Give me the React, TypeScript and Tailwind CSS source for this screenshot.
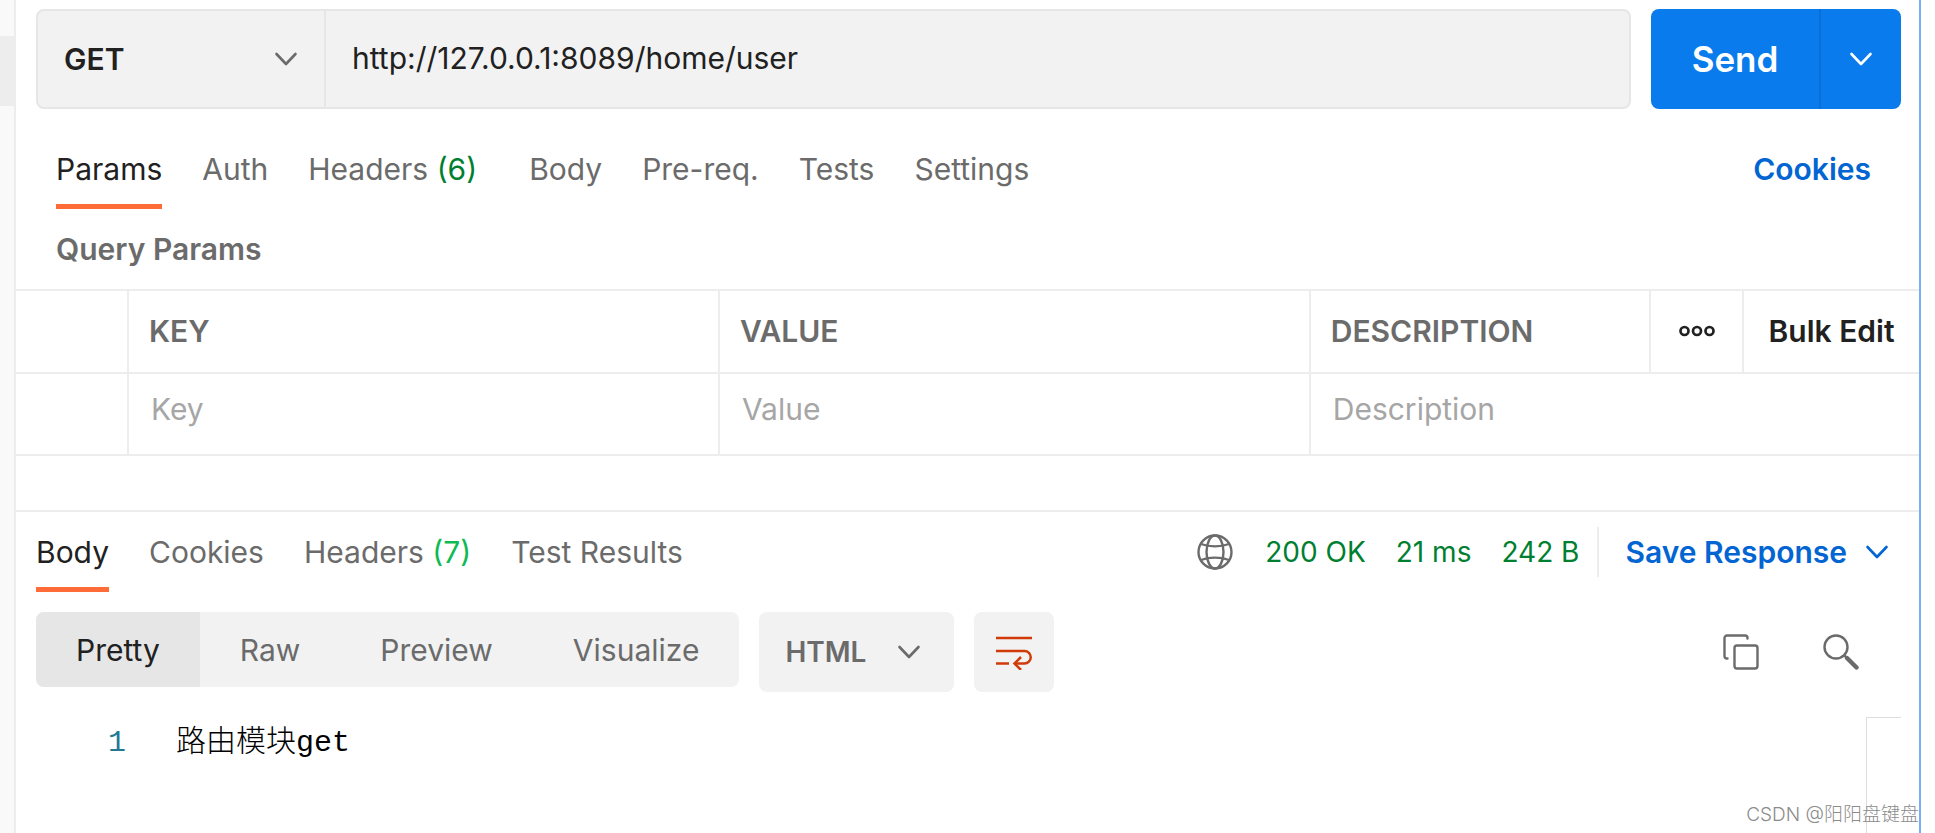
import { useState } from 'react';

const requestTabs = [
  { label: 'Params' },
  { label: 'Auth' },
  { label: 'Headers', count: 6 },
  { label: 'Body' },
  { label: 'Pre-req.' },
  { label: 'Tests' },
  { label: 'Settings' },
];

const responseTabs = [
  { label: 'Body' },
  { label: 'Cookies' },
  { label: 'Headers', count: 7 },
  { label: 'Test Results' },
];

const viewModes = ['Pretty', 'Raw', 'Preview', 'Visualize'];

const Chevron = ({ className }: { className?: string }) => (
  <svg
    viewBox="0 0 24 14"
    className={`h-[14px] w-6 ${className ?? ''}`}
    fill="none"
    stroke="currentColor"
    strokeWidth="2.6"
    strokeLinecap="round"
    strokeLinejoin="round"
  >
    <path d="M2.500 2l9.500 10L21.500 2" />
  </svg>
);

const GlobeIcon = () => (
  <svg viewBox="0 0 36 36" className="size-9" fill="none" stroke="currentColor" strokeWidth="2.4">
    <circle cx="18" cy="18" r="16.5" />
    <ellipse cx="18" cy="18" rx="8.5" ry="16.5" />
    <path d="M4 10c8 3.200 20 3.200 28 0M4 26c8-3.200 20-3.200 28 0" />
  </svg>
);

const CopyIcon = () => (
  <svg viewBox="0 0 36 36" className="size-9" fill="none" stroke="currentColor" strokeWidth="2.4" strokeLinecap="round">
    <rect x="11.500" y="11.500" width="23" height="23" rx="2.500" />
    <path d="M4.500 24.500H4A2.500 2.500 0 0 1 1.500 22V4A2.500 2.500 0 0 1 4 1.500h18A2.500 2.500 0 0 1 24.500 4v.5" />
  </svg>
);

const SearchIcon = () => (
  <svg viewBox="0 0 36 36" className="size-9" fill="none" stroke="currentColor" strokeLinecap="round">
    <circle cx="13" cy="13" r="11.500" strokeWidth="2.400" />
    <path d="M21.500 21.500l2 2" strokeWidth="2.400" />
    <path d="M24 24l9.500 9.500" strokeWidth="4.400" />
  </svg>
);

const WrapIcon = () => (
  <svg viewBox="0 0 36 36" className="size-9" fill="none" stroke="currentColor" strokeWidth="2.500">
    <path d="M0 4h36M0 17h28.500a6.250 6.250 0 0 1 0 12.500H19M0 29.500h13" />
    <path d="M25 23l-6.500 6.500L25 36" />
  </svg>
);

const MoreIcon = () => (
  <svg viewBox="0 0 36 12" className="h-3 w-9" fill="none" stroke="currentColor" strokeWidth="2.700">
    <circle cx="5.500" cy="6" r="4" />
    <circle cx="18" cy="6" r="4" />
    <circle cx="30.500" cy="6" r="4" />
  </svg>
);

const App = () => {
  const [method, setMethod] = useState('GET');
  const [url, setUrl] = useState('http://127.0.0.1:8089/home/user');
  const [requestTab, setRequestTab] = useState('Params');
  const [responseTab, setResponseTab] = useState('Body');
  const [viewMode, setViewMode] = useState('Pretty');
  const [format, setFormat] = useState('HTML');

  return (
    <div className="relative flex min-h-screen bg-white font-['Inter','Noto_Sans_CJK_SC',sans-serif] text-[30px] leading-9 text-[#6b6b6b]">
      {/* Collapsed sidebar */}
      <aside className="w-4 shrink-0 border-r-2 border-[#ededed] bg-[#f9f9f9] pt-9">
        <div className="h-[70px] bg-[#ededed]" />
      </aside>

      <main className="mr-[14px] flex min-w-0 flex-1 flex-col border-r-2 border-[#7aadf7]">
        {/* Request bar */}
        <div className="flex gap-5 pt-[9px] pr-[18px] pl-5">
          <div className="flex h-[100px] min-w-0 flex-1 rounded-lg border-2 border-[#e6e6e6] bg-[#f2f2f2] text-[#212121]">
            <div className="relative w-[288px] shrink-0 border-r-2 border-[#e6e6e6]">
              <select
                aria-label="Method"
                value={method}
                onChange={(e) => setMethod(e.target.value)}
                className="h-full w-full appearance-none bg-transparent px-[26px] text-[30px] font-semibold outline-none"
              >
                <option>GET</option>
                <option>POST</option>
                <option>PUT</option>
                <option>DELETE</option>
              </select>
              <Chevron className="pointer-events-none absolute top-[41px] right-[26px] text-[#6b6b6b]" />
            </div>
            <input
              type="text"
              aria-label="Request URL"
              value={url}
              onChange={(e) => setUrl(e.target.value)}
              className="min-w-0 flex-1 bg-transparent px-[26px] pb-0.5 outline-none"
            />
          </div>
          <div className="flex h-[100px] w-[250px] shrink-0 overflow-hidden rounded-lg bg-[#097bed] text-white">
            <button className="flex-1 text-[35px] font-semibold">Send</button>
            <button aria-label="Send options" className="flex w-[82px] items-center justify-center border-l-2 border-[#0a70d8]">
              <Chevron />
            </button>
          </div>
        </div>

        {/* Request tabs */}
        <div className="flex items-end justify-between pt-[42px] pr-12 pl-10">
          <div className="flex gap-10">
            {requestTabs.map((tab) => (
              <button
                key={tab.label}
                onClick={() => setRequestTab(tab.label)}
                className={`border-b-[5px] pb-[17px] ${
                  requestTab === tab.label ? 'border-[#ff6c37] text-[#212121]' : 'border-transparent'
                } ${tab.count ? 'pr-3' : ''}`}
              >
                {tab.label}
                {tab.count && <span className="text-[#007f31]"> ({tab.count})</span>}
              </button>
            ))}
          </div>
          <a href="#cookies" className="pb-[22px] font-semibold text-[#0265d2]">
            Cookies
          </a>
        </div>

        {/* Query params */}
        <h2 className="pt-[22px] pb-[22px] pl-10 font-semibold">Query Params</h2>
        <table className="w-full table-fixed border-collapse text-left">
          <colgroup>
            <col className="w-28" />
            <col className="w-[31.05%]" />
            <col className="w-[31.05%]" />
            <col />
            <col className="w-[93px]" />
            <col className="w-[176px]" />
          </colgroup>
          <thead>
            <tr className="h-[83px] border-y-2 border-[#ededed]">
              <td className="border-r-2 border-[#ededed]" />
              <th className="border-r-2 border-[#ededed] pb-0.5 pl-5 font-semibold">KEY</th>
              <th className="border-r-2 border-[#ededed] pb-0.5 pl-5 font-semibold">VALUE</th>
              <th className="border-r-2 border-[#ededed] pb-0.5 pl-5 font-semibold">DESCRIPTION</th>
              <th className="border-r-2 border-[#ededed] pb-0.5">
                <button aria-label="More columns" className="flex w-full justify-center text-[#212121]">
                  <MoreIcon />
                </button>
              </th>
              <th className="pb-0.5">
                <button className="w-full text-center font-semibold whitespace-nowrap text-[#212121]">Bulk Edit</button>
              </th>
            </tr>
          </thead>
          <tbody>
            <tr className="h-[82px] border-b-2 border-[#ededed]">
              <td className="border-r-2 border-[#ededed]" />
              <td className="border-r-2 border-[#ededed] pb-[10px] pl-[22px]">
                <input aria-label="Key" placeholder="Key" className="block w-full outline-none placeholder:text-[#a6a6a6]" />
              </td>
              <td className="border-r-2 border-[#ededed] pb-[10px] pl-[22px]">
                <input aria-label="Value" placeholder="Value" className="block w-full outline-none placeholder:text-[#a6a6a6]" />
              </td>
              <td colSpan={3} className="pb-[10px] pl-[22px]">
                <input
                  aria-label="Description"
                  placeholder="Description"
                  className="block w-full outline-none placeholder:text-[#a6a6a6]"
                />
              </td>
            </tr>
          </tbody>
        </table>

        {/* Response */}
        <section className="mt-[54px] flex flex-1 flex-col border-t-2 border-[#ededed]">
          <div className="flex items-start justify-between pt-[15px] pr-[30px] pl-5">
            <div className="flex gap-10 pt-[7px]">
              {responseTabs.map((tab) => (
                <button
                  key={tab.label}
                  onClick={() => setResponseTab(tab.label)}
                  className={`border-b-[5px] pb-[17px] ${
                    responseTab === tab.label ? 'border-[#ff6c37] text-[#212121]' : 'border-transparent'
                  }`}
                >
                  {tab.label}
                  {tab.count && <span className="text-[#0cbb52]"> ({tab.count})</span>}
                </button>
              ))}
            </div>
            <div className="flex items-center">
              <GlobeIcon />
              <div className="flex gap-[30px] pr-[18px] pl-8 text-[28px] text-[#007f31]">
                <span>200 OK</span>
                <span>21 ms</span>
                <span>242 B</span>
              </div>
              <button className="flex h-[50px] items-center gap-[18px] border-l-2 border-[#ededed] pl-[26px] font-semibold text-[#0265d2]">
                Save Response
                <Chevron />
              </button>
            </div>
          </div>

          {/* Response toolbar */}
          <div className="flex items-start gap-5 pt-5 pr-[60px] pl-5">
            <div className="flex h-[75px] overflow-hidden rounded-lg bg-[#f2f2f2]">
              {viewModes.map((mode) => (
                <button
                  key={mode}
                  onClick={() => setViewMode(mode)}
                  className={`px-10 ${viewMode === mode ? 'bg-[#e6e6e6] text-[#212121]' : ''}`}
                >
                  {mode}
                </button>
              ))}
            </div>
            <div className="relative h-20 w-[195px] rounded-lg bg-[#f2f2f2]">
              <select
                aria-label="Response format"
                value={format}
                onChange={(e) => setFormat(e.target.value)}
                className="h-full w-full appearance-none bg-transparent px-[26px] text-[28px] font-semibold outline-none"
              >
                <option>HTML</option>
                <option>JSON</option>
                <option>XML</option>
                <option>Text</option>
              </select>
              <Chevron className="pointer-events-none absolute top-[33px] right-[33px]" />
            </div>
            <button aria-label="Wrap lines" className="flex size-20 items-center justify-center rounded-lg bg-[#f2f2f2] text-[#d13b0a]">
              <WrapIcon />
            </button>
            <div className="ml-auto flex gap-16 pt-[22px]">
              <button aria-label="Copy">
                <CopyIcon />
              </button>
              <button aria-label="Search">
                <SearchIcon />
              </button>
            </div>
          </div>

          {/* Code */}
          <div className="flex flex-1 pt-[25px] pr-[18px]">
            <pre className="flex flex-1 pt-1.5 font-['Liberation_Mono','Noto_Sans_CJK_SC',monospace] leading-10">
              <span className="w-[110px] text-right text-[#237893]">1</span>
              <code className="pl-[50px] font-['Liberation_Mono','Noto_Sans_CJK_SC',monospace] text-black">
                <span className="font-light">路由模块</span>get
              </code>
            </pre>
            <div className="w-[35px] border-t border-l border-[#dedede]" />
          </div>
        </section>
      </main>

      <span className="absolute right-4 bottom-1 text-[19px] leading-7 font-light text-[#8c8c8c]">
        CSDN @阳阳盘键盘
      </span>
    </div>
  );
};

export default App;
